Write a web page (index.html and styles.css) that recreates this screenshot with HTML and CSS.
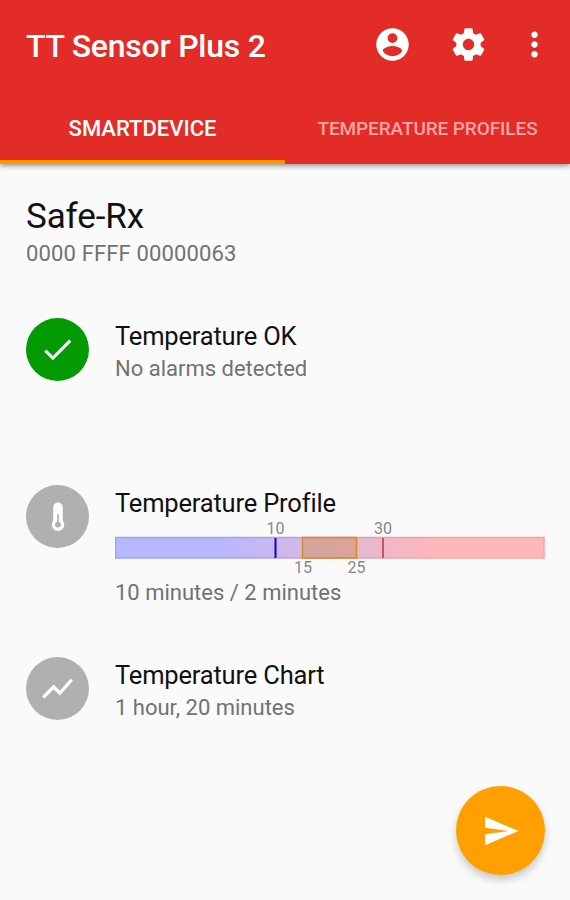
FILE: index.html
```html
<!DOCTYPE html>
<html lang="en">
<head>
    <meta charset="UTF-8">
    <meta name="viewport" content="width=device-width, initial-scale=1.0">
    <title>TT Sensor Plus 2</title>
    <link rel="stylesheet" href="styles.css">
</head>
<body>
    <header class="app-bar">
        <div class="toolbar">
            <h1>TT Sensor Plus 2</h1>
            <div class="actions">
                <svg class="icon" viewBox="0 0 24 24"><path d="M12 2C6.48 2 2 6.48 2 12s4.48 10 10 10 10-4.48 10-10S17.52 2 12 2zm0 3c1.66 0 3 1.34 3 3s-1.34 3-3 3-3-1.34-3-3 1.34-3 3-3zm0 14.2c-2.5 0-4.71-1.28-6-3.22.03-1.99 4-3.08 6-3.08 1.99 0 5.97 1.09 6 3.08-1.29 1.94-3.5 3.22-6 3.22z"/></svg>
                <svg class="icon" viewBox="0 0 24 24"><path d="M19.43 12.98c.04-.32.07-.64.07-.98s-.03-.66-.07-.98l2.11-1.65c.19-.15.24-.42.12-.64l-2-3.46c-.12-.22-.39-.3-.61-.22l-2.49 1c-.52-.4-1.08-.73-1.69-.98l-.38-2.65C14.46 2.18 14.25 2 14 2h-4c-.25 0-.46.18-.49.42l-.38 2.65c-.61.25-1.17.59-1.69.98l-2.49-1c-.23-.09-.49 0-.61.22l-2 3.46c-.13.22-.07.49.12.64l2.11 1.65c-.04.32-.07.65-.07.98s.03.66.07.98l-2.11 1.65c-.19.15-.24.42-.12.64l2 3.46c.12.22.39.3.61.22l2.49-1c.52.4 1.08.73 1.69.98l.38 2.65c.03.24.24.42.49.42h4c.25 0 .46-.18.49-.42l.38-2.65c.61-.25 1.17-.59 1.69-.98l2.49 1c.23.09.49 0 .61-.22l2-3.46c.12-.22.07-.49-.12-.64l-2.11-1.65zM12 15.5c-1.93 0-3.5-1.57-3.5-3.5s1.57-3.5 3.5-3.5 3.5 1.57 3.5 3.5-1.57 3.5-3.5 3.5z"/></svg>
                <svg class="icon more" viewBox="0 0 24 24"><path d="M12 8c1.1 0 2-.9 2-2s-.9-2-2-2-2 .9-2 2 .9 2 2 2zm0 2c-1.1 0-2 .9-2 2s.9 2 2 2 2-.9 2-2-.9-2-2-2zm0 6c-1.1 0-2 .9-2 2s.9 2 2 2 2-.9 2-2-.9-2-2-2z"/></svg>
            </div>
        </div>
        <nav class="tabs">
            <div class="tab active">SMARTDEVICE</div>
            <div class="tab">TEMPERATURE PROFILES</div>
        </nav>
    </header>

    <main class="content">
        <h2>Safe-Rx</h2>
        <p class="serial">0000 FFFF 00000063</p>

        <section class="item status">
            <div class="badge ok">
                <svg viewBox="0 0 24 24"><path d="M9 16.17L4.83 12l-1.42 1.41L9 19 21 7l-1.41-1.41z"/></svg>
            </div>
            <div class="item-text">
                <h3>Temperature OK</h3>
                <p>No alarms detected</p>
            </div>
        </section>

        <section class="item profile">
            <div class="badge">
                <svg class="thermometer" viewBox="0 0 14 30"><path d="M2.2 5.3a4.8 4.8 0 0 1 9.6 0V18.6a6.3 6.3 0 1 1-9.6 0z"/><path class="mercury" d="M6.2 12.3h1.6v7.4a3 3 0 1 1-1.6 0z"/></svg>
            </div>
            <div class="item-text">
                <h3>Temperature Profile</h3>
                <svg class="gauge" viewBox="0 0 430 57">
                    <defs>
                        <linearGradient id="range">
                            <stop offset="0.25" stop-color="#b8b8ff"/>
                            <stop offset="0.75" stop-color="#ffb8b8"/>
                        </linearGradient>
                        <linearGradient id="outline">
                            <stop offset="0.25" stop-color="#a0a0f5"/>
                            <stop offset="0.75" stop-color="#ffa0a0"/>
                        </linearGradient>
                    </defs>
                    <rect x="0.5" y="18.5" width="428.5" height="20.5" fill="url(#range)" stroke="url(#outline)" stroke-width="1.5"/>
                    <rect class="allowed" x="187.5" y="18.5" width="54" height="20.5"/>
                    <path class="low" d="M160.5 19v20"/>
                    <path class="high" d="M268 19v20"/>
                    <text x="160.5" y="15">10</text>
                    <text x="268" y="15">30</text>
                    <text x="188" y="54">15</text>
                    <text x="241.5" y="54">25</text>
                </svg>
                <p>10 minutes / 2 minutes</p>
            </div>
        </section>

        <section class="item">
            <div class="badge">
                <svg viewBox="0 0 24 24"><path d="M3.5 18.49l6-6.01 4 4L22 6.92l-1.41-1.41-7.09 7.97-4-4L2 16.99z"/></svg>
            </div>
            <div class="item-text">
                <h3>Temperature Chart</h3>
                <p>1 hour, 20 minutes</p>
            </div>
        </section>
    </main>

    <button class="fab" aria-label="Send">
        <svg viewBox="0 0 24 24"><path d="M2.01 21L23 12 2.01 3 2 10l15 2-15 2z"/></svg>
    </button>
</body>
</html>
```
FILE: styles.css
```css
* {
    margin: 0;
    padding: 0;
    box-sizing: border-box;
}

body {
    height: 900px;
    overflow: hidden;
    font-family: Roboto, sans-serif;
    background: #fafafa;
    color: #111;
}

svg {
    display: block;
    flex-shrink: 0;
}

h1, h2, h3 {
    font-weight: 400;
    white-space: nowrap;
}

.app-bar {
    height: 164px;
    background: #e32b28;
    color: white;
    box-shadow: 0 2px 5px rgba(0, 0, 0, 0.4);
}

.toolbar {
    display: flex;
    align-items: center;
    justify-content: space-between;
    height: 89px;
    padding: 0 16px 0 26px;
}

h1 {
    font-size: 32px;
    font-weight: 500;
    line-height: 40px;
    letter-spacing: -0.25px;
    padding-top: 2px;
}

.actions {
    display: flex;
    gap: 37px;
}

.icon {
    width: 39px;
    height: 39px;
    fill: white;
}

.more {
    margin-left: -10px;
}

.tabs {
    display: flex;
    height: 75px;
}

.tab {
    flex: 1;
    padding-top: 26px;
    font-size: 19px;
    font-weight: 500;
    line-height: 28px;
    letter-spacing: -0.1px;
    text-align: center;
    white-space: nowrap;
    color: #f9a6a4;
}

.tab.active {
    font-size: 22px;
    letter-spacing: 0;
    color: white;
    border-bottom: 4px solid #ff9800;
}

.content {
    padding: 32px 25px 0 26px;
}

h2 {
    font-size: 35px;
    line-height: 42px;
    letter-spacing: -0.1px;
}

.serial {
    font-size: 22px;
    line-height: 32px;
    letter-spacing: 0.15px;
    color: #727272;
}

.item {
    display: flex;
    gap: 26px;
    height: 104px;
}

.status {
    height: 167px;
    margin-top: 48px;
}

.profile {
    height: 172px;
}

.badge {
    display: flex;
    align-items: center;
    justify-content: center;
    flex-shrink: 0;
    width: 63px;
    height: 63px;
    border-radius: 50%;
    background: #b0b0b0;
}

.badge svg {
    width: 37px;
    height: 37px;
    fill: white;
}

.badge.ok {
    background: #049a04;
}

.badge .thermometer {
    width: 14px;
    height: 30px;
}

.mercury {
    fill: #b0b0b0;
}

.item-text {
    padding-top: 2px;
}

h3 {
    font-size: 25.5px;
    line-height: 32px;
    letter-spacing: -0.18px;
}

.item-text p {
    font-size: 22px;
    line-height: 34px;
    color: #727272;
}

.gauge {
    width: 430px;
    height: 57px;
}

.gauge text {
    font-size: 16px;
    fill: #888;
    text-anchor: middle;
}

.allowed {
    fill: rgba(215, 148, 115, 0.6);
    stroke: #d98a24;
    stroke-width: 1.5px;
}

.low {
    stroke: #1500c8;
    stroke-width: 2px;
}

.high {
    stroke: #d84a68;
    stroke-width: 2px;
}

.fab {
    position: absolute;
    left: 456px;
    top: 786px;
    display: flex;
    align-items: center;
    justify-content: center;
    width: 89px;
    height: 89px;
    border: none;
    border-radius: 50%;
    background: #ffa000;
    box-shadow: 0 5px 9px rgba(0, 0, 0, 0.2);
}

.fab svg {
    width: 38px;
    height: 38px;
    fill: white;
}
```
